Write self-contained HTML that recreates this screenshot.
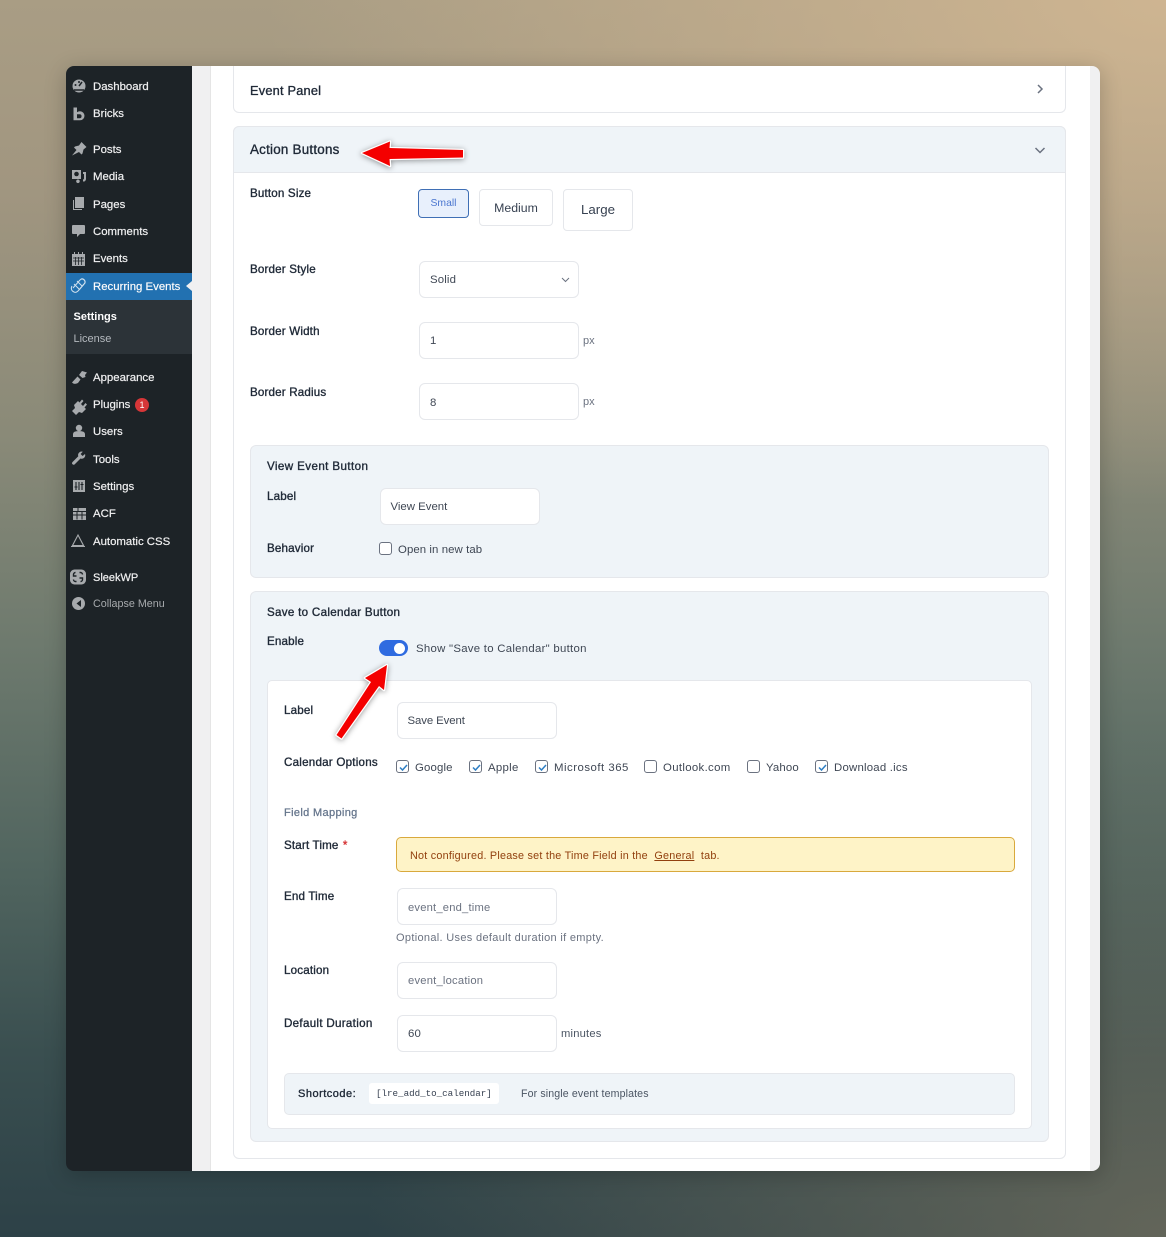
<!DOCTYPE html>
<html><head><meta charset="utf-8">
<style>
html,body{margin:0;padding:0;width:1166px;height:1237px;overflow:hidden}
body{position:relative;font-family:"Liberation Sans",sans-serif;background:
radial-gradient(ellipse 900px 500px at 1166px 0,rgba(208,182,146,.95),rgba(208,182,146,0) 100%),
linear-gradient(180deg,#a99d84 0,#a19680 15%,#8a8a78 35%,#6e7a6e 52%,#51655f 70%,#3a4f50 85%,#2d4147 100%)}
.bgr{position:absolute;left:0;top:0;width:1166px;height:1237px;background:radial-gradient(ellipse 800px 500px at 1166px 1237px,rgba(112,110,94,.8),rgba(112,110,94,0) 100%)}
#w{position:absolute;left:66px;top:66px;width:1034px;height:1105px;border-radius:8px;box-shadow:0 4px 22px rgba(0,0,0,.22)}
#a{position:absolute;left:0;top:0;width:1166px;height:1237px}
.t{position:absolute;white-space:nowrap;line-height:16px;height:16px;transform:translateY(1px)}
.box{position:absolute;box-sizing:border-box}
.sb{color:#f0f0f1;font-size:11.4px;-webkit-text-stroke:.2px #f0f0f1}
.l{color:#1f2937;font-size:11.6px;-webkit-text-stroke:.35px #1f2937;letter-spacing:.17px}
.v{color:#3f4754;font-size:11.4px;letter-spacing:.15px}
.inp{background:#fff;border:1px solid #e5e7eb;border-radius:6px;width:160px;height:37px}
.cb{position:absolute;box-sizing:border-box;width:13px;height:13px;border:1px solid #6b7280;border-radius:3px;background:#fff}
.cb svg{position:absolute;left:1px;top:1px}
.ic{position:absolute;left:0;top:0}
</style></head>
<body>
<div class="bgr"></div>
<div id="w"></div>
<div id="a">
<!-- main panel -->
<div class="box" style="left:192px;top:66px;width:908px;height:1105px;background:#f0f0f1;border-radius:0 8px 8px 0"></div>
<div class="box" style="left:210px;top:66px;width:880px;height:1105px;background:#fff;border-left:1px solid #e5e5e5"></div>

<!-- sidebar -->
<div class="box" style="left:66px;top:66px;width:126px;height:1105px;background:#1d2327;border-radius:8px 0 0 8px"></div>
<div class="box" style="left:66px;top:300px;width:126px;height:54px;background:#2c3338"></div>
<div class="box" style="left:66px;top:273px;width:126px;height:27px;background:#2271b1"></div>
<div class="box" style="left:186px;top:281px;width:0;height:0;border-top:5.5px solid transparent;border-bottom:5.5px solid transparent;border-right:6px solid #f0f0f1"></div>

<svg class="ic" width="1166" height="1237" fill="#a7aaad">
<!-- dashboard -->
<circle cx="79" cy="86" r="6.5"/><path d="M79 86l3-4" stroke="#1d2327" stroke-width="1.5"/><circle cx="75.5" cy="85" r="1" fill="#1d2327"/><circle cx="79" cy="82" r="1" fill="#1d2327"/><path d="M74 90h10" stroke="#1d2327" stroke-width="1.5"/>
<!-- bricks -->
<path d="M73.500 107.500h3.500v4.700q1.200-.9 3-.9a4.500 4.500 0 0 1 0 9h-6.500zM77 114.300v3.900h2.600a1.950 1.950 0 0 0 0-3.900z" fill-rule="evenodd"/>
<!-- posts -->
<path d="M72 155.500l4.500-5.500-2.500-2.500 1-1 4-1 2.500-3.500 5 5-3 2.500-1 4-1 1-2.500-2.500z"/>
<!-- media -->
<path d="M72 170h9v9h-9zM83 172h3v7a2.500 2.500 0 0 1-3 2.500v-2q1 0 1-1v-4.500h-1zM78 179.500a1.800 1.800 0 1 1-.1 0z"/><circle cx="76.500" cy="174" r="2.300" fill="#1d2327"/>
<!-- pages -->
<path d="M75 197h9v11h-9z"/><path d="M73 200h1v9h8v1h-9z"/>
<!-- comments -->
<path d="M73 225h11a1 1 0 0 1 1 1v7a1 1 0 0 1-1 1h-4l-3 3v-3h-4a1 1 0 0 1-1-1v-7a1 1 0 0 1 1-1z"/>
<!-- events -->
<path d="M72 254h13v12h-13zM74 252h1v3h-1zM82 252h1v3h-1zM78 252h1v3h-1z"/><path d="M73 258h11M75.500 257v8M78.500 257v8M81.500 257v8M73 261h11" stroke="#1d2327" stroke-width=".8" fill="none"/>
<!-- recurring -->
<g fill="none" stroke="#cfe0ee" stroke-width="1"><path d="M73 288l7-8a3 3 0 0 1 5 3l-6 7"/><path d="M72 286a4 4 0 0 0 2 6q2 1 4-1l6-7a3 3 0 0 0-3-5"/><path d="M74 284l5 5M77 281l5 5"/></g>
<!-- appearance -->
<path d="M72 382.500l5.500-6 3 3-2.500 3.500q-4 2-6-.5zM79 375l3-4 5 1.500-2 2.500.5 2-3 1z"/>
<!-- plugins -->
<path d="M72 411l3-3-1-3 4-4 1.500 1.500 2.500-3 1.500 1.500-2.500 3 2 2 2.500-3 1.500 1.500-2.500 3 1.500 1.500-4 4-3-1-3 3z"/>
<!-- users -->
<circle cx="79" cy="428" r="3.200"/><path d="M73 437v-3q0-3 6-3t6 3v3z"/>
<!-- tools -->
<path d="M85 454a3.500 3.500 0 0 1-4.500 4.500l-6 6a1.600 1.600 0 0 1-2.200-2.200l6-6a3.500 3.500 0 0 1 4.500-4.500l-2.200 2.200 2 2z"/>
<!-- settings -->
<path d="M73 480h12v12h-12z"/><path d="M76 482v8M82 482v8M79 482v8M74.500 487h3M80.500 484.500h3" stroke="#1d2327" stroke-width="1.100" fill="none"/>
<!-- acf -->
<path d="M73 508h13v12h-13z"/><path d="M73 511.500h13M73 515h13M77 511.500v8M82 511.500v8M78 508v3" stroke="#1d2327" stroke-width="1" fill="none"/>
<!-- automatic css -->
<path d="M78 535l5.500 10.500h-11zM71 546.500h14" fill="none" stroke="#a7aaad" stroke-width="1.100"/>
<!-- sleek -->
<rect x="70" y="569.500" width="16" height="15" rx="4.500"/><path d="M75.500 572.500a2 2 0 0 0-2 2v1.500h3M80.500 581.500a2 2 0 0 0 2-2v-1.500h-3M79.500 572.500h1a2 2 0 0 1 2 2M76.500 581.500h-1a2 2 0 0 1-2-2" stroke="#1d2327" stroke-width="1.400" fill="none"/>
<!-- collapse -->
<circle cx="78.500" cy="603.500" r="6.500"/><path d="M81 600v7l-4.500-3.500z" fill="#1d2327"/>
</svg>

<span class="t sb" style="left:93px;top:78px">Dashboard</span>
<span class="t sb" style="left:93px;top:105px">Bricks</span>
<span class="t sb" style="left:93px;top:141px">Posts</span>
<span class="t sb" style="left:93px;top:168px">Media</span>
<span class="t sb" style="left:93px;top:196px">Pages</span>
<span class="t sb" style="left:93px;top:223px">Comments</span>
<span class="t sb" style="left:93px;top:250px">Events</span>
<span class="t sb" style="left:93px;top:278px;color:#fff">Recurring Events</span>
<span class="t" style="left:73.500px;top:308px;color:#fff;font-size:11px;font-weight:bold">Settings</span>
<span class="t" style="left:73.500px;top:330px;color:#b4b9be;font-size:11px">License</span>
<span class="t sb" style="left:93px;top:369px">Appearance</span>
<span class="t sb" style="left:93px;top:396px">Plugins</span>
<div class="box" style="left:135px;top:398px;width:14px;height:14px;border-radius:50%;background:#d63638;color:#fff;font-size:9px;line-height:14px;text-align:center">1</div>
<span class="t sb" style="left:93px;top:423px">Users</span>
<span class="t sb" style="left:93px;top:451px">Tools</span>
<span class="t sb" style="left:93px;top:478px">Settings</span>
<span class="t sb" style="left:93px;top:505px">ACF</span>
<span class="t sb" style="left:93px;top:533px">Automatic CSS</span>
<span class="t sb" style="left:93px;top:569px;font-size:11px">SleekWP</span>
<span class="t" style="left:93px;top:595px;color:#a7aaad;font-size:10.750px">Collapse Menu</span>

<!-- Event Panel -->
<div class="box" style="left:233px;top:66px;width:833px;height:47px;background:#fff;border:1px solid #e5e7eb;border-top:0;border-radius:0 0 6px 6px"></div>
<span class="t" style="left:250px;top:82px;font-size:12.800px;letter-spacing:.2px;color:#1f2937;-webkit-text-stroke:.35px #1f2937">Event Panel</span>

<!-- Action Buttons section -->
<div class="box" style="left:233px;top:126px;width:833px;height:1033px;background:#fff;border:1px solid #e5e7eb;border-radius:6px"></div>
<div class="box" style="left:233px;top:126px;width:833px;height:47px;background:#eff4f8;border:1px solid #e5e7eb;border-radius:6px 6px 0 0"></div>
<span class="t" style="left:250px;top:141px;font-size:13.400px;letter-spacing:.23px;color:#1f2937;-webkit-text-stroke:.35px #1f2937">Action Buttons</span>
<svg class="ic" width="1166" height="200" fill="none" stroke="#6b7280" stroke-width="1.500"><path d="M1038 85l4 4-4 4"/><path d="M1035.500 148l4.500 4.500 4.500-4.500"/></svg>

<span class="t l" style="left:250px;top:185px">Button Size</span>
<div class="box" style="left:418px;top:189px;width:51px;height:29px;background:#e8f0fc;border:1px solid #3f6fb5;border-radius:4px;color:#4a76cf;font-size:10.400px;line-height:27px;text-align:center">Small</div>
<div class="box" style="left:479px;top:189px;width:74px;height:37px;background:#fff;border:1px solid #e5e7eb;border-radius:4px;color:#374151;font-size:12.300px;line-height:36px;text-align:center">Medium</div>
<div class="box" style="left:563px;top:189px;width:70px;height:42px;background:#fff;border:1px solid #e5e7eb;border-radius:4px;color:#374151;font-size:13.300px;line-height:40px;text-align:center">Large</div>

<span class="t l" style="left:250px;top:261px">Border Style</span>
<div class="box inp" style="left:419px;top:261px"></div>
<span class="t v" style="left:430px;top:271px">Solid</span>
<svg class="ic" width="1166" height="300" fill="none" stroke="#6b7280" stroke-width="1"><path d="M562 278l3.500 3.500 3.500-3.500"/></svg>

<span class="t l" style="left:250px;top:323px">Border Width</span>
<div class="box inp" style="left:419px;top:322px"></div>
<span class="t v" style="left:430px;top:332px">1</span>
<span class="t" style="left:583px;top:332px;font-size:11px;color:#6b7280">px</span>

<span class="t l" style="left:250px;top:384px">Border Radius</span>
<div class="box inp" style="left:419px;top:383px"></div>
<span class="t v" style="left:430px;top:394px">8</span>
<span class="t" style="left:583px;top:393px;font-size:11px;color:#6b7280">px</span>

<!-- View Event -->
<div class="box" style="left:250px;top:445px;width:799px;height:133px;background:#eff4f8;border:1px solid #e5e7eb;border-radius:6px"></div>
<span class="t l" style="left:267px;top:458px;letter-spacing:.4px">View Event Button</span>
<span class="t l" style="left:267px;top:488px">Label</span>
<div class="box inp" style="left:380px;top:488px"></div>
<span class="t v" style="left:390.500px;top:498px;letter-spacing:0">View Event</span>
<span class="t l" style="left:267px;top:540px">Behavior</span>
<div class="cb" style="left:379px;top:542px"></div>
<span class="t v" style="left:398px;top:541px;letter-spacing:.08px">Open in new tab</span>

<!-- Save to calendar -->
<div class="box" style="left:250px;top:591px;width:799px;height:551px;background:#eff4f8;border:1px solid #e5e7eb;border-radius:6px"></div>
<span class="t l" style="left:267px;top:604px;letter-spacing:.3px">Save to Calendar Button</span>
<span class="t l" style="left:267px;top:633px">Enable</span>
<div class="box" style="left:379px;top:640px;width:29px;height:16px;background:#2f6be0;border-radius:8px"></div>
<div class="box" style="left:394px;top:642.500px;width:11px;height:11px;background:#fff;border-radius:50%"></div>
<span class="t v" style="left:416px;top:640px;letter-spacing:.27px">Show "Save to Calendar" button</span>

<div class="box" style="left:267px;top:680px;width:765px;height:449px;background:#fff;border:1px solid #e5e7eb;border-radius:5px"></div>
<span class="t l" style="left:284px;top:702px">Label</span>
<div class="box inp" style="left:397px;top:702px"></div>
<span class="t v" style="left:407.500px;top:712px;letter-spacing:-.1px">Save Event</span>

<span class="t l" style="left:284px;top:754px;letter-spacing:.23px">Calendar Options</span>
<div class="cb" style="left:396px;top:760px"><svg width="11" height="11" fill="none" stroke="#2f7fc4" stroke-width="1.500"><path d="M2 5.500l2.500 2.500 4.500-5"/></svg></div>
<span class="t v" style="left:415px;top:759px">Google</span>
<div class="cb" style="left:469px;top:760px"><svg width="11" height="11" fill="none" stroke="#2f7fc4" stroke-width="1.500"><path d="M2 5.500l2.500 2.500 4.500-5"/></svg></div>
<span class="t v" style="left:488px;top:759px;letter-spacing:.3px">Apple</span>
<div class="cb" style="left:535px;top:760px"><svg width="11" height="11" fill="none" stroke="#2f7fc4" stroke-width="1.500"><path d="M2 5.500l2.500 2.500 4.500-5"/></svg></div>
<span class="t v" style="left:554px;top:759px;letter-spacing:.5px">Microsoft 365</span>
<div class="cb" style="left:644px;top:760px"></div>
<span class="t v" style="left:663px;top:759px;letter-spacing:.33px">Outlook.com</span>
<div class="cb" style="left:747px;top:760px"></div>
<span class="t v" style="left:766px;top:759px">Yahoo</span>
<div class="cb" style="left:815px;top:760px"><svg width="11" height="11" fill="none" stroke="#2f7fc4" stroke-width="1.500"><path d="M2 5.500l2.500 2.500 4.500-5"/></svg></div>
<span class="t v" style="left:834px;top:759px;letter-spacing:.22px">Download .ics</span>

<span class="t" style="left:284px;top:804px;font-size:11px;color:#64748b;-webkit-text-stroke:.25px #64748b;letter-spacing:.35px">Field Mapping</span>

<span class="t l" style="left:284px;top:837px">Start Time <span style="color:#d63638;-webkit-text-stroke:.35px #d63638;margin-left:1px">*</span></span>
<div class="box" style="left:396px;top:837px;width:619px;height:35px;background:#fef3c7;border:1px solid #d9a93c;border-radius:5px"></div>
<span class="t" style="left:410px;top:847px;font-size:10.800px;color:#92400e;letter-spacing:.23px">Not configured. Please set the Time Field in the &nbsp;<u>General</u>&nbsp; tab.</span>

<span class="t l" style="left:284px;top:888px">End Time</span>
<div class="box inp" style="left:397px;top:888px"></div>
<span class="t" style="left:408px;top:899px;font-size:11.200px;color:#6b7280;letter-spacing:.2px">event_end_time</span>
<span class="t" style="left:396px;top:929px;font-size:11px;color:#6b7280;letter-spacing:.32px">Optional. Uses default duration if empty.</span>

<span class="t l" style="left:284px;top:962px">Location</span>
<div class="box inp" style="left:397px;top:962px"></div>
<span class="t" style="left:408px;top:972px;font-size:11.200px;color:#6b7280;letter-spacing:.22px">event_location</span>

<span class="t l" style="left:284px;top:1015px;letter-spacing:.3px">Default Duration</span>
<div class="box inp" style="left:397px;top:1015px"></div>
<span class="t v" style="left:408px;top:1025px">60</span>
<span class="t" style="left:561px;top:1025px;font-size:11.200px;color:#4b5563;letter-spacing:.2px">minutes</span>

<div class="box" style="left:284px;top:1073px;width:731px;height:42px;background:#eff4f8;border:1px solid #e5e7eb;border-radius:5px"></div>
<span class="t" style="left:298px;top:1085px;font-size:11px;color:#1f2937;-webkit-text-stroke:.35px #1f2937;letter-spacing:.5px">Shortcode:</span>
<div class="box" style="left:369px;top:1083px;width:130px;height:21px;background:#fff;border-radius:3px"></div>
<span class="t" style="left:376px;top:1085px;font-family:'Liberation Mono',monospace;font-size:9.200px;color:#374151">[lre_add_to_calendar]</span>
<span class="t" style="left:521px;top:1085px;font-size:10.600px;color:#4b5563;letter-spacing:.13px">For single event templates</span>

<!-- red arrows -->
<svg class="ic" width="1166" height="1237" style="filter:drop-shadow(0 1px 3px rgba(0,0,0,.4))">
<path d="M362 153L390 141.500L389.500 148L463 150L463 157.500L389.500 159L390 166Z" fill="#f40000" stroke="#fff" stroke-width="2.500" stroke-linejoin="round" paint-order="stroke"/>
<path d="M387 665L365 678L371 682L336.500 735L341.500 738.500L379 686L384 690Z" fill="#f40000" stroke="#fff" stroke-width="2.500" stroke-linejoin="round" paint-order="stroke"/>
</svg>
</div>
</body></html>
